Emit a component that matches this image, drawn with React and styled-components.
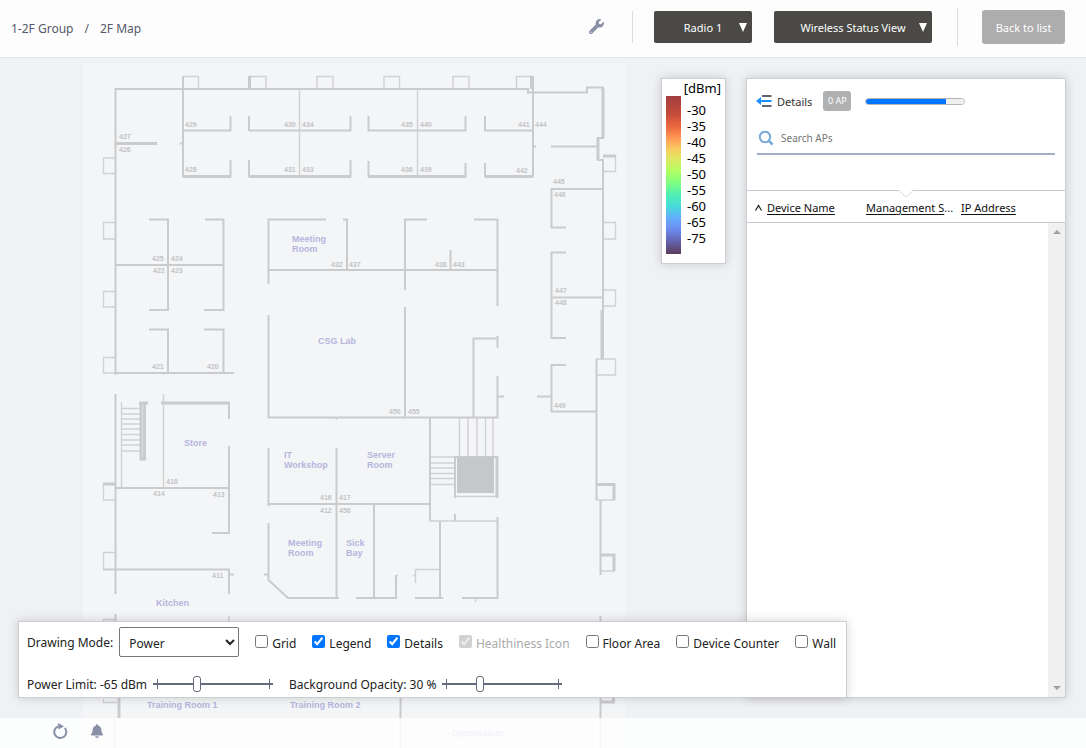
import React, { useState } from 'react';
import styled, { createGlobalStyle } from 'styled-components';
import { FaWrench, FaBell } from 'react-icons/fa';

const GlobalStyle = createGlobalStyle`
  * {
    box-sizing: border-box;
  }

  body {
    margin: 0;
    background: #eff1f5;
    color: #333;
    font-family: 'Noto Sans', 'Open Sans', sans-serif;
    font-size: 12px;
    line-height: 16px;
  }

  button, input, select {
    font: inherit;
    color: inherit;
  }
`;

const Page = styled.div`
  display: flex;
  flex-direction: column;
  height: 100vh;
  overflow: hidden;
`;

const Header = styled.header`
  display: flex;
  align-items: center;
  height: 58px;
  padding: 0 21px 4px 11px;
  background: #fdfdfd;
  border-bottom: 1px solid #e3e5e9;
`;

const Breadcrumb = styled.nav`
  display: flex;
  flex: 1;
  gap: 11px;
  padding-top: 4px;
  color: #55596a;

  & a {
    color: inherit;
    text-decoration: none;
  }
`;

const IconButton = styled.button`
  display: flex;
  padding: 0;
  border: none;
  background: none;
  color: #8a8fa8;
  cursor: pointer;
`;

const Divider = styled.span`
  width: 1px;
  height: ${(props) => props.$height};
  margin: ${(props) => props.$margin};
  background: #dcdde1;
`;

const DarkSelectWrap = styled.label`
  position: relative;
  width: ${(props) => props.$width};
  margin-right: ${(props) => props.$gap};
  color: #fff;

  &::after {
    content: '';
    position: absolute;
    right: 5px;
    top: 12px;
    border: 4px solid transparent;
    border-top: 9px solid #fff;
    border-bottom: none;
    pointer-events: none;
  }
`;

const DarkSelect = styled.select`
  display: block;
  width: 100%;
  height: 32px;
  padding: 2px 0 0;
  border: none;
  border-radius: 2px;
  background: #4a4946;
  appearance: none;
  font-size: 11px;
  text-align: center;
  text-align-last: center;
`;

const BackButton = styled.button`
  height: 34px;
  width: 83px;
  padding: 2px 0 0;
  border: none;
  border-radius: 3px;
  background: #adadad;
  color: #fff;
  font-size: 11px;
`;

const Stage = styled.main`
  position: relative;
  flex: 1;
  min-height: 0;
  overflow: hidden;
`;

const Plan = styled.svg`
  display: block;
  margin: 5px 0 0 83px;
  background: #f4f5f7;
`;

const Overlay = styled.div`
  position: absolute;
  inset: 20px 20px 50px 18px;
  display: flex;
  justify-content: flex-end;
  align-items: flex-start;
  gap: 20px;
`;

const Panel = styled.section`
  background: #fff;
  border: 1px solid #cbcdd0;
  box-shadow: 0 0 10px rgba(0, 0, 0, 0.16);
`;

const LegendPanel = styled(Panel)`
  width: 65px;
  height: 186px;
  padding: 1px 4px 0;
  color: #000;
  font-size: 13px;
`;

const LegendUnit = styled.div`
  text-align: right;
`;

const LegendBody = styled.div`
  display: flex;
  gap: 6px;
`;

const LegendBar = styled.div`
  width: 15px;
  height: 158px;
  background: linear-gradient(
    #a13e3e 0%,
    #c84c3b 12%,
    #ee6b3f 20%,
    #ff9b55 27%,
    #fac860 33%,
    #e3e563 39%,
    #b4ff62 47%,
    #7dff80 55%,
    #4eedb8 63%,
    #46dada 70%,
    #63aefc 77%,
    #6c8ef0 84%,
    #6568b8 91%,
    #5b3c5c 100%
  );
`;

const LegendScale = styled.ul`
  margin: 0;
  padding: 6px 0 0;
  list-style: none;
`;

const DetailsPanel = styled(Panel)`
  display: flex;
  flex-direction: column;
  align-self: stretch;
  width: 320px;
`;

const DetailsTop = styled.div`
  display: flex;
  align-items: center;
  height: 20px;
  margin: 12px 10px 0 9px;
`;

const DetailsTitle = styled.h2`
  margin: 0 11px 0 5px;
  padding-top: 1px;
  font-size: 11px;
  font-weight: 400;
`;

const Badge = styled.span`
  width: 28px;
  margin-right: 14px;
  border-radius: 3px;
  background: #b0b0b0;
  color: #fff;
  font-size: 9px;
  line-height: 20px;
  text-align: center;
`;

const Usage = styled.progress`
  width: 100px;
  height: 7px;
  border: 1px solid #b4b4b4;
  border-radius: 4px;
  overflow: hidden;
  appearance: none;

  &::-webkit-progress-bar {
    background: #efefef;
  }

  &::-webkit-progress-value {
    background: #0075ff;
  }
`;

const SearchBox = styled.label`
  display: flex;
  align-items: center;
  gap: 6px;
  height: 32px;
  margin: 12px 10px 35px;
  border-bottom: 2px solid #a0b0c5;
`;

const SearchInput = styled.input`
  flex: 1;
  min-width: 0;
  padding: 0;
  border: none;
  outline: none;
  font-size: 10px;

  &::placeholder {
    color: #757575;
  }
`;

const TableHead = styled.div`
  position: relative;
  border-top: 1px solid #c6cacc;
  border-bottom: 1px solid #c6cacc;
`;

const Notch = styled.svg`
  position: absolute;
  left: 152px;
  top: -1px;
`;

const Table = styled.table`
  width: 100%;
  table-layout: fixed;
  border-collapse: collapse;
  color: #111;

  & th {
    height: 31px;
    padding: 3px 0 0;
    font-size: 11px;
    font-weight: 400;
    text-align: left;
    white-space: nowrap;
  }

  & a {
    color: inherit;
    text-underline-offset: 2px;
  }
`;

const Th = styled.th`
  width: ${(props) => props.$width};
`;

const TableBody = styled.div`
  display: flex;
  flex: 1;
  justify-content: flex-end;
`;

const ScrollTrack = styled.div`
  display: flex;
  flex-direction: column;
  justify-content: space-between;
  align-items: center;
  width: 17px;
  padding: 7px 0;
  background: #f0f0f0;
`;

const ToolPanel = styled(Panel)`
  position: absolute;
  left: 18px;
  bottom: 50px;
  display: flex;
  flex-direction: column;
  gap: 18px;
  height: 77px;
  padding: 5px 10px 0 8px;
  white-space: nowrap;
  color: #222;
`;

const ToolRow = styled.div`
  display: flex;
  align-items: center;
`;

const Field = styled.label`
  display: flex;
  align-items: center;
  gap: 6px;
  margin-right: 16px;
`;

const FieldText = styled.span`
  padding-top: 2px;
`;

const ModeSelect = styled.select`
  width: 120px;
  height: 30px;
  padding: 2px 0 0 5px;
  border: 1px solid #767676;
  border-radius: 2px;
  background: #fff;
`;

const CheckLabel = styled.label`
  display: flex;
  align-items: center;
  gap: 4px;
  margin-right: 16px;
  padding-top: 3px;
  color: ${(props) => (props.$disabled ? '#aaa' : 'inherit')};

  &:last-child {
    margin-right: 0;
  }

  & input {
    width: 13px;
    height: 13px;
    margin: 0 0 5px;
  }
`;

const Slider = styled.input`
  width: 120px;
  height: 18px;
  margin: 0;
  appearance: none;
  background:
    linear-gradient(#666b7b, #666b7b) center / 100% 2px no-repeat,
    linear-gradient(#666b7b, #666b7b) 4px center / 1px 10px no-repeat,
    linear-gradient(#666b7b, #666b7b) 116px center / 1px 10px no-repeat;

  &::-webkit-slider-thumb {
    width: 8px;
    height: 16px;
    border: 1px solid #666b7b;
    border-radius: 3px;
    background: #fff;
    appearance: none;
  }
`;

const Footer = styled.footer`
  position: absolute;
  left: 0;
  right: 0;
  bottom: 0;
  display: flex;
  align-items: center;
  gap: 22px;
  height: 30px;
  padding: 0 52px 4px;
  background: rgba(255, 255, 255, 0.82);
`;

const WALLS = {
  thin: `
    M183 89V76.5H198.5V89 M250 89V76.5H266V89 M317 89V76.5H333V89
    M384 89V76.5H399.5V89 M453 89V76.5H469V89 M516.5 89V76.5H532.5V89
    M115 158H103.5V173.5H115 M115 222.5H103.5V239H115 M115 291.5H103.5V307H115
    M115 357.5H103.5V373H115 M115 484H103.5V500H115 M115 552.5H103.5V569.5
    M115 619.5H103.5V629 M103.5 699V702.5H117
    M603 156H615.5V171.5H603 M603 222.5H615.5V239H603 M603 290H615.5V306H603
    M596 359H615.5V375H596 M596 484H614V500H596 M600.5 555H614V571H600.5
    M299.5 89V176 M417.5 89V176 M121.5 402V488 M163.5 394V488
    M122 408.5H140 M122 414H140 M122 419H140 M122 424H140 M122 429H140
    M122 434.5H140 M122 440H140 M122 445H140 M122 451H140
    M459.5 418V456 M468 418V456 M477 418V456 M485.5 418V456 M493 418V456
    M430 457H455 M430 463H455 M430 468H455 M430 473.5H455 M430 478.5H455 M430 484.5H455
    M455 496.5H498 M430 521H498 M475.5 598V602 M413 575.5H415.5
    M415.5 583V569.5H440 M396 575.5H398 M114.5 718V760 M229 616V630
    M163.5 372V375 M336.5 417V420`,
  normal: `
    M115.5 375V89H528V92.5H587V87.5H603V138H598V160H603V359
    M115.5 394V594 M596.5 359V500 M600.5 500V575 M600.5 616V630 M600.5 698V760
    M115.5 614V630 M400.5 698V760
    M183 76V177 M180 143.5H183 M183 130.5H231 M230.5 116V131 M230.5 160V177
    M249 116V131 M249 130.5H351 M350.5 116V131 M249 160V177 M350.5 160V177
    M368.5 116V130.5H465.5V116 M368.5 161V177 M465.5 163V177
    M485 116V130.5H533 M485 163V177 M533 76V177 M533 146.5H536 M551 146.5H598
    M603 189H551.5V227.5H566 M566 252.5H551.5V338H566 M551.5 297.5H603
    M566 365H551.5V411.5H596 M537 396.5H551
    M149 219.5H168V310H149 M205 219.5H223.5V310H204 M116 265H223
    M149 329.5H168V372 M204 329.5H223.5V372 M116 373H234
    M268.5 284V219.5H326 M343 219.5H347V270 M268 270H497
    M405 290V219.5H427 M474 219.5H497.5V306 M450.5 250V270
    M268.5 315V417.5H497.5V376 M405 307V417 M473.5 417V338.5H497.5 M497.5 336V348
    M498 396.5H504 M430 418V521 M268.5 448V506 M336.5 448V598 M268 504H430
    M268.5 523V580L288 598H339 M264 574.5H268 M356 598H396V575 M374 504V598
    M455 514V521 M497.5 517V598H462 M440 521V598 M415 598H443
    M229 402V419 M229 446V533H212 M116 488H229 M103 569.5H229V594 M229 574.5H234
    M455 498V457H497V498`,
  thick: `
    M116 143.5H157 M183 176.5H231 M249 176.5H351 M368 176.5H466 M485 176.5H533
    M161 403H229 M139 403H148 M141 403V459H144.5V403 M603 88V138 M602 310V359
    M598 138V160 M603 156H616 M597 484.5H614V500 M601 555H614V571 M103 484H115
    M601 702H613.5V698 M119 698V718 M249.5 76V89 M531.5 76V89 M497 457V498`,
};

const ROOM_NUMBERS = [
  ['427', 119, 139], ['426', 119, 152], ['429', 185, 127], ['428', 185, 172],
  ['430', 284, 127], ['434', 302, 127], ['431', 284, 172], ['433', 302, 172],
  ['435', 401, 127], ['440', 420, 127], ['436', 401, 172], ['439', 420, 172],
  ['441', 518, 127], ['444', 535, 127], ['442', 516, 173], ['445', 553, 184],
  ['446', 554, 197], ['447', 555, 293], ['448', 555, 305], ['449', 554, 408],
  ['425', 152, 261], ['424', 171, 261], ['422', 153, 273], ['423', 171, 273],
  ['432', 331, 267], ['437', 349, 267], ['438', 435, 267], ['443', 453, 267],
  ['421', 152, 369], ['420', 207, 369], ['450', 389, 414], ['455', 408, 414],
  ['418', 166, 484], ['414', 153, 496], ['413', 213, 497], ['416', 320, 500],
  ['417', 339, 500], ['412', 320, 513], ['456', 339, 513], ['411', 212, 578],
];

const ROOM_NAMES = [
  ['Meeting', 292, 242], ['Room', 292, 252], ['CSG Lab', 318, 344],
  ['Store', 184, 446], ['IT', 284, 458], ['Workshop', 284, 468],
  ['Server', 367, 458], ['Room', 367, 468], ['Meeting', 288, 546],
  ['Room', 288, 556], ['Sick', 346, 546], ['Bay', 346, 556],
  ['Kitchen', 156, 606], ['Training Room 1', 147, 708],
  ['Training Room 2', 290, 708], ['Gymnasium', 452, 736],
];

const FloorPlan = () => (
  <Plan width="542" height="697" viewBox="83 63 542 697" role="img" aria-label="2F Map">
    <g fill="none" stroke="#cacbcd">
      <path strokeWidth="1.4" stroke="#d0d1d3" d={WALLS.thin} />
      <path strokeWidth="2" d={WALLS.normal} />
      <path strokeWidth="3" d={WALLS.thick} />
    </g>
    <rect x="457" y="457" width="37" height="36" fill="#c6c7c9" />
    <g fontFamily="Liberation Sans, Arial, sans-serif" fontWeight="700">
      <g fill="#c3c4c6" fontSize="7">
        {ROOM_NUMBERS.map(([label, x, y]) => (
          <text key={label} x={x} y={y}>{label}</text>
        ))}
      </g>
      <g fill="#b6b5de" fontSize="9">
        {ROOM_NAMES.map(([label, x, y]) => (
          <text key={`${label}-${x}`} x={x} y={y}>{label}</text>
        ))}
      </g>
    </g>
  </Plan>
);

const LEVELS = [-30, -35, -40, -45, -50, -55, -60, -65, -75];

const Legend = () => (
  <LegendPanel>
    <LegendUnit>[dBm]</LegendUnit>
    <LegendBody>
      <LegendBar />
      <LegendScale>
        {LEVELS.map((level) => (
          <li key={level}>{level}</li>
        ))}
      </LegendScale>
    </LegendBody>
  </LegendPanel>
);

const Details = () => (
  <DetailsPanel>
    <DetailsTop>
      <IconButton aria-label="Collapse details">
        <svg width="16" height="12" viewBox="0 0 16 12">
          <path d="M6 1H15.5M6 11H15.5" stroke="#5f6575" strokeWidth="2" />
          <path d="M4 6H15.5" stroke="#1890ff" strokeWidth="2" />
          <path d="M0 6L5 2V10Z" fill="#1890ff" />
        </svg>
      </IconButton>
      <DetailsTitle>Details</DetailsTitle>
      <Badge>0 AP</Badge>
      <Usage value="81" max="100" aria-label="Usage" />
    </DetailsTop>
    <SearchBox>
      <svg width="18" height="18" viewBox="0 0 18 18" fill="none" stroke="#78aadc" aria-hidden="true">
        <circle cx="8" cy="8" r="5.2" strokeWidth="2" />
        <path d="M11.6 11.6L15.5 15.5" strokeWidth="2.6" />
      </svg>
      <SearchInput type="text" placeholder="Search APs" aria-label="Search APs" />
    </SearchBox>
    <TableHead>
      <Notch width="14" height="9" viewBox="0 0 14 9">
        <path d="M0 0H14L7 7Z" fill="#fff" />
        <path d="M0 .5L7 7L14 .5" fill="none" stroke="#dcdcdf" />
      </Notch>
      <Table>
        <thead>
          <tr>
            <Th $width="20px" aria-label="Sort order">
              <svg width="20" height="8" viewBox="0 0 20 8" fill="none" stroke="#222" strokeWidth="1.2">
                <path d="M8.5 6.5L11.5 1.5L14.5 6.5" />
              </svg>
            </Th>
            <Th $width="99px"><a href="#device">Device Name</a></Th>
            <Th $width="95px"><a href="#status">Management S</a>...</Th>
            <Th><a href="#ip">IP Address</a></Th>
          </tr>
        </thead>
      </Table>
    </TableHead>
    <TableBody>
      <ScrollTrack>
        <svg width="8" height="4" viewBox="0 0 8 4"><path d="M0 4L4 0L8 4Z" fill="#a0a0a0" /></svg>
        <svg width="8" height="4" viewBox="0 0 8 4"><path d="M0 0L4 4L8 0Z" fill="#a0a0a0" /></svg>
      </ScrollTrack>
    </TableBody>
  </DetailsPanel>
);

const OPTIONS = [
  { name: 'Grid' },
  { name: 'Legend', checked: true },
  { name: 'Details', checked: true },
  { name: 'Healthiness Icon', checked: true, disabled: true },
  { name: 'Floor Area' },
  { name: 'Device Counter' },
  { name: 'Wall' },
];

const DrawingTools = () => {
  const [power, setPower] = useState(-65);
  const [opacity, setOpacity] = useState(30);

  return (
    <ToolPanel>
      <ToolRow>
        <Field>
          <FieldText>Drawing Mode:</FieldText>
          <ModeSelect>
            <option>Power</option>
          </ModeSelect>
        </Field>
        {OPTIONS.map(({ name, checked, disabled }) => (
          <CheckLabel key={name} $disabled={disabled}>
            <input type="checkbox" defaultChecked={checked} disabled={disabled} />
            {name}
          </CheckLabel>
        ))}
      </ToolRow>
      <ToolRow>
        <Field>
          <FieldText>Power Limit: {power} dBm</FieldText>
          <Slider
            type="range"
            min="-90"
            max="-20"
            value={power}
            onChange={(e) => setPower(Number(e.target.value))}
          />
        </Field>
        <Field>
          <FieldText>Background Opacity: {opacity} %</FieldText>
          <Slider
            type="range"
            value={opacity}
            onChange={(e) => setOpacity(Number(e.target.value))}
          />
        </Field>
      </ToolRow>
    </ToolPanel>
  );
};

const App = () => (
  <Page>
    <GlobalStyle />
    <Header>
      <Breadcrumb>
        <a href="#group">1-2F Group</a>
        <span>/</span>
        <span>2F Map</span>
      </Breadcrumb>
      <IconButton aria-label="Settings">
        <FaWrench size={15} />
      </IconButton>
      <Divider $height="32px" $margin="0 21px 0 28px" />
      <DarkSelectWrap $width="98px" $gap="22px">
        <DarkSelect aria-label="Radio">
          <option>Radio 1</option>
        </DarkSelect>
      </DarkSelectWrap>
      <DarkSelectWrap $width="158px" $gap="0">
        <DarkSelect aria-label="View">
          <option>Wireless Status View</option>
        </DarkSelect>
      </DarkSelectWrap>
      <Divider $height="38px" $margin="0 24px 0 25px" />
      <BackButton>Back to list</BackButton>
    </Header>
    <Stage>
      <FloorPlan />
      <Overlay>
        <Legend />
        <Details />
      </Overlay>
      <DrawingTools />
      <Footer>
        <IconButton aria-label="Reload">
          <svg width="16" height="16" viewBox="0 0 16 16">
            <path d="M12.8 5A6 6 0 1 1 6.5 3.2" fill="none" stroke="#8a8fa8" strokeWidth="2" />
            <path d="M6 0L12 3.2L6.5 6.4Z" fill="#8a8fa8" />
          </svg>
        </IconButton>
        <IconButton aria-label="Notifications">
          <FaBell size={14} />
        </IconButton>
      </Footer>
    </Stage>
  </Page>
);

export default App;
